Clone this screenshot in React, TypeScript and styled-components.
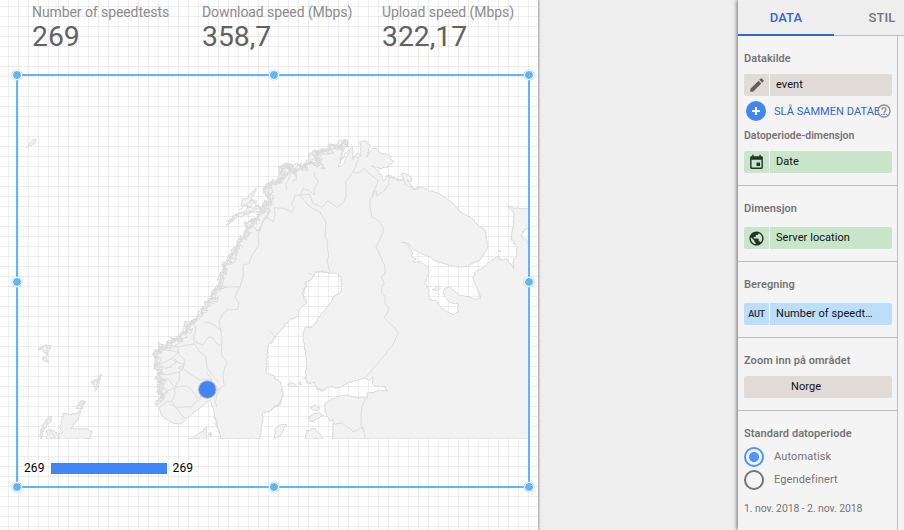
import React from 'react';
import styled, { createGlobalStyle } from 'styled-components';

const GlobalStyle = createGlobalStyle`
  *, *::before { box-sizing: border-box; }
  body { margin: 0; background: #eee; font-family: Roboto, sans-serif; overflow: hidden; }
`;

const Page = styled.div`
  display: flex;
  justify-content: space-between;
  width: 904px;
  height: 530px;
  overflow: hidden;
  background: #eee;
`;

const Report = styled.main`
  width: 538px;
  height: 530px;
  background-color: #fff;
  background-image: linear-gradient(to right, rgba(0, 0, 0, 0.062) 1px, transparent 1px),
    linear-gradient(to bottom, rgba(0, 0, 0, 0.062) 1px, transparent 1px);
  background-size: 10px 10px;
  background-position: 8px 6px;
  box-shadow: 1px 0 2px rgba(0, 0, 0, 0.35);
`;

const Scorecards = styled.div`
  display: grid;
  grid-template-columns: 170px 180px 1fr;
  height: 74px;
  padding: 4px 0 0 32px;
`;

const Score = styled.div`
  white-space: nowrap;
`;

const ScoreLabel = styled.div`
  font-size: 14px;
  line-height: 16px;
  letter-spacing: -0.08px;
  color: #8c8c8c;
`;

const ScoreValue = styled.div`
  padding-top: 1px;
  font-size: 28.300px;
  line-height: 32px;
  color: #616161;
`;

const ChartFrame = styled.section`
  position: relative;
  width: 514px;
  height: 414px;
  margin-left: 16px;
  border: 2px solid #64b5f6;
`;

const Handle = styled.i<{ $x: number; $y: number }>`
  position: absolute;
  left: ${(p) => p.$x}%;
  top: ${(p) => p.$y}%;
  width: 10px;
  height: 10px;
  margin: ${(p) => (p.$y === 0 ? -6 : -4)}px 0 0 ${(p) => (p.$x === 0 ? -6 : -4)}px;
  border: 1px solid #fff;
  border-radius: 50%;
  background: #64b5f6;
  background-clip: padding-box;
  box-shadow: 0 0 0 0.6px #b5dafa;
`;

const MapSvg = styled.svg`
  display: block;
  width: 510px;
  height: 363px;
`;

const Legend = styled.div`
  display: flex;
  align-items: center;
  height: 16px;
  margin: 21px 0 0 6px;
  gap: 6px;
  font-size: 12px;
  letter-spacing: 0.1px;
  color: #000;
`;

const LegendBar = styled.div`
  width: 116px;
  height: 11px;
  margin-top: 1px;
  background: #4285f4;
`;

const Panel = styled.aside`
  width: 166px;
  height: 530px;
  background: #f4f4f4;
  box-shadow: -1px 0 4px rgba(0, 0, 0, 0.55);
`;

const Tabs = styled.nav`
  display: flex;
  height: 36px;
  background: #eee;
  overflow: hidden;
`;

const Tab = styled.div<{ $active?: boolean }>`
  flex: 0 0 96px;
  height: 36px;
  line-height: 35px;
  text-align: center;
  font-size: 13px;
  font-weight: 500;
  letter-spacing: 0.1px;
  color: ${(p) => (p.$active ? '#3367d6' : '#757575')};
  border-bottom: ${(p) => (p.$active ? '2px solid #3367d6' : '1px solid #bdbdbd')};
`;

const PanelBody = styled.div`
  width: 160px;
  height: 494px;
  border-right: 1px solid #bdbdbd;
`;

const Section = styled.section<{ $height: number; $last?: boolean }>`
  height: ${(p) => p.$height}px;
  padding: 16px 5px 0 6px;
  border-bottom: ${(p) => (p.$last ? '0' : '1px solid #bdbdbd')};
`;

const Label = styled.h3<{ $height?: number; $small?: boolean }>`
  margin: 0;
  height: ${(p) => p.$height ?? 25}px;
  line-height: 14px;
  font-size: ${(p) => (p.$small ? 10.5 : 11)}px;
  font-weight: 600;
  letter-spacing: ${(p) => (p.$small ? 0 : 0.06)}px;
  color: #757575;
  white-space: nowrap;
`;

const Chip = styled.div<{ $color: string }>`
  display: flex;
  height: 22px;
  width: 148px;
  border-radius: 2px;
  background: ${(p) => p.$color};
  font-size: 11px;
  line-height: 21px;
  color: #111;
  overflow: hidden;
`;

const ChipIcon = styled.div`
  display: flex;
  align-items: center;
  justify-content: center;
  width: 26px;
  border-right: 1px solid #fff;
  font-size: 9px;
  font-weight: 600;
  letter-spacing: -0.3px;
  color: #333;
`;

const ChipText = styled.div<{ $indent?: number }>`
  padding-left: ${(p) => p.$indent ?? 6}px;
  letter-spacing: 0.06px;
  white-space: nowrap;
`;

const BlendRow = styled.div`
  display: flex;
  align-items: center;
  height: 30px;
  padding-left: 2px;
  margin-bottom: 3px;
  color: #3367d6;
  font-size: 11px;
`;

const PlusButton = styled.div`
  display: flex;
  flex: none;
  width: 20px;
  height: 20px;
  margin-right: 8px;
  align-items: center;
  justify-content: center;
  border-radius: 50%;
  background: #4285f4;
`;

const BlendText = styled.span`
  flex: none;
  width: 102px;
  white-space: nowrap;
  letter-spacing: 0.05px;
`;

const HelpIcon = styled.svg`
  flex: none;
  width: 16px;
  height: 16px;
`;

const RadioRow = styled.div<{ $checked?: boolean }>`
  display: flex;
  align-items: center;
  gap: 10px;
  height: 23px;
  font-size: 11px;
  letter-spacing: 0.12px;
  color: #757575;
  &::before {
    content: '';
    width: 20px;
    height: 20px;
    border-radius: 50%;
    border: 2px solid ${(p) => (p.$checked ? '#5094ff' : '#757575')};
    background: ${(p) => (p.$checked ? 'radial-gradient(circle, #5094ff 4.7px, transparent 5.3px)' : 'transparent')};
  }
`;

const DateRange = styled.div`
  margin-top: 11px;
  line-height: 14px;
  font-size: 10.5px;
  letter-spacing: -0.1px;
  color: #757575;
`;

type Point = [number, number];

// Each coast line is a flat list of x,y pairs in the map's own coordinates.
const toPoints = (s: string): Point[] =>
  s.trim().split(/\s+/).map((p) => p.split(',').map(Number) as Point);

// Subdivides a line and displaces it to give the ragged look of a fjord coast.
const ragged = (pts: Point[], amp: number, seed: number, step = 2): Point[] => {
  let s = seed;
  const rnd = () => {
    s = (s * 16807) % 2147483647;
    return s / 2147483647 - 0.5;
  };
  const out: Point[] = [];
  for (let i = 0; i < pts.length - 1; i++) {
    const [x1, y1] = pts[i];
    const [x2, y2] = pts[i + 1];
    const n = Math.max(1, Math.round(Math.hypot(x2 - x1, y2 - y1) / step));
    for (let k = 0; k < n; k++) {
      out.push([
        x1 + ((x2 - x1) * k) / n + rnd() * amp,
        y1 + ((y2 - y1) * k) / n + rnd() * amp,
      ]);
    }
  }
  out.push(pts[pts.length - 1]);
  return out;
};

const join = (pts: Point[]) => pts.map(([x, y]) => `${x.toFixed(1)},${y.toFixed(1)}`).join(' ');

const swedenWest = toPoints('221,439 218,427 215,417 214,410 212,406 209,400 207,402');
const norwaySouth = toPoints('207,402 203,405 195,412 187,418 182,423 178,424 170,422 161,415 159,408 157,403');
const norwayWest = toPoints('157,403 161,396 157,390 160,382 157,377 160,372 154,368 156,360 154,353 160,345 165,347 170,339 179,339 182,332 189,329 184,325 190,322 197,318 200,311 204,307 208,301 212,298 211,294 215,291 217,287 220,284 219,277 223,270 223,263 230,258 232,250 238,245 238,240 245,236 246,230 247,223 255,219 257,214 262,210 265,203 270,200 265,193 265,187 272,182 277,182 281,176 280,167 288,165 293,172 296,165 303,168 307,162 315,164 319,160 313,153 322,150 328,152 330,145 337,148 345,140');
const finnmark = toPoints('345,140 348,142 346,147 343,150 340,161 339,167 343,165 349,152 353,146 353,160 357,152 360,157 361,145 359,142 365,141 370,145 367,157 372,149 377,148 380,153 390,155 391,159 394,162 389,165 387,168 380,168 372,166');
const murman = toPoints('372,166 380,173 384,181 388,175 400,180 404,180 401,173 405,173 412,178 411,182 407,180 412,187 415,190 417,187 422,187 430,191 438,193 446,198 453,203 459,211 464,214 473,219 477,224 485,230 486,239 488,245 487,250 483,255 479,261 473,263 468,266 462,267 452,266 440,262 435,261 430,257 420,253 415,250 410,245 407,243 402,242');
const whiteSea = toPoints('402,242 407,244 410,248 413,254 411,256 416,259 413,262 421,262 428,267 429,273 425,282 429,290 429,299 436,301 442,308 446,311 453,315 458,312 458,303 454,304 450,302 445,297 443,292 445,288 450,287 457,293 460,296 466,296 475,299 481,298 478,290 473,278 475,272 483,268 488,263 495,258 499,257 500,260 507,259 509,262 511,264 514,269 513,261 517,255 516,249 518,247 514,244 515,241 511,240 513,227 514,213 507,205 513,208 529,209');
const eastEdge = toPoints('529,209 529,228 524,230 521,237 526,239 529,245 529,439 333,439');
const baltics = toPoints('333,439 333,419 330,421 328,417 325,412 325,403 333,399 339,396 347,395 358,398 367,398 367,393 375,392 379,390 387,391 385,387 375,386 372,383 373,377 369,381 365,378 357,380');
const finland = toPoints('357,380 347,383 340,388 330,387 322,391 317,389 314,382 308,384 305,378 306,370 307,360 305,350 303,337 305,327 313,327 317,320 325,310 331,302 333,297 341,292 341,278 336,273');
const bothnia = toPoints('336,273 330,273 322,271 315,273 311,280 307,282 303,295 304,300 307,303 301,307 297,317 290,320 283,327 280,332 275,337 268,345 267,358 266,373 273,376 280,382 283,392 282,399 280,405 274,406 271,411 262,413 263,420 261,430 260,439');

const mainland = join([
  ...ragged(swedenWest, 1.3, 11),
  ...ragged(norwaySouth, 1.2, 17),
  ...ragged(norwayWest, 4.2, 22),
  ...ragged(finnmark, 1.5, 31),
  ...ragged(murman, 0.9, 42),
  ...ragged(whiteSea, 0.8, 53),
  ...eastEdge,
  ...ragged(baltics, 0.8, 64),
  ...ragged(finland, 1.3, 75),
  ...ragged(bothnia, 1.4, 86),
]);

const fjords = [101, 257, 419].map((seed, n) =>
  join(ragged(norwayWest.map(([x, y]) => [x + 1 + n, y + n / 2]), 6.5, seed, 1.8)));
const skerries = [
  '305,378 311,384 317,388 322,391',
  '311,275 315,274 321,272 330,273',
  '307,282 303,295 306,303',
  '283,392 282,399 279,405 273,406',
  '215,417 217,426 218,429',
  '388,176 400,180 413,187 421,188',
  '343,150 340,160 345,157 350,150',
  '228,223 234,217 243,214 249,211 258,209 265,205',
  '241,209 247,204 252,200 256,205 261,210',
  '246,232 252,226 258,232 262,222 270,212 265,203',
  '266,190 271,184 273,192 267,196 270,207',
  '281,172 285,166 291,168 287,174 283,180 277,184',
  '306,164 312,162 316,167 322,164 324,170 320,160',
  '310,154 317,155 323,151 329,147',
  '155,352 165,350 175,346 182,339',
  '160,366 170,368 177,362 171,358',
  '156,378 166,380 160,388 168,392 159,398',
  '224,264 232,264 236,262',
].map((s, i) => join(ragged(toPoints(s), 4, 301 + i * 19, 1.8)));

const borders = [
  '217,407 215,402 218,390 224,385 223,378 224,370 227,362 223,358 221,353 222,342 221,330 219,322 222,315 227,310 238,309 239,303 235,297 238,290 240,287 243,277 243,265 249,264 251,257 259,245 258,235 260,229 263,220 268,218 273,222 275,214 274,208 283,208 292,212 294,208 292,205 295,196 300,195 303,189 308,190 314,195',
  '314,195 315,189 318,181 314,176 315,172',
  '300,195 309,194 313,203 322,207 328,201 337,207 344,202 346,196 346,182 353,172 358,173 365,168 368,173 374,177 378,180 377,185 373,192 372,198',
  '300,195 304,201 310,207 320,212 326,223 325,236 328,242 327,247 329,254 327,261 330,272',
  '389,176 389,184 385,190 377,196 376,190 373,195 372,198 370,199 370,208 372,217 379,221 384,230 380,239 376,247 380,255 385,267 385,274 381,276 384,283 381,289 382,293 385,296 385,303 389,308 387,314 384,317 389,323 395,328 398,333 393,345 378,363 365,378',
  '367,398 362,406 361,413 361,425 364,431 365,439',
  '333,424 342,423 347,427 350,428 353,432 363,427 364,432',
  '204,322 210,323 217,327 221,330',
  '193,323 196,329 194,335 194,341 203,345 208,337 213,338 218,345 221,345',
  '168,345 178,347 186,345 194,344 200,352 206,357 207,367 213,376 219,383',
  '178,347 179,355 185,360 183,368 191,375 200,380 210,379',
  '157,373 167,375 180,372 183,367',
  '180,372 179,380 175,387 186,386 193,391 197,398 202,397',
  '207,373 211,378 213,388 215,397',
  '220,391 214,383 209,379',
  '160,407 167,402 172,401 175,394 175,387 166,392 163,398',
  '172,401 176,407 181,407 191,407 196,402 201,399',
  '170,404 178,409 182,416 186,418',
  '166,350 178,352 173,358 165,362 156,365',
  '157,382 168,379 174,386',
  '175,361 185,365 178,368 183,370',
  '215,289 223,288 229,287 240,287',
  '270,198 272,205 262,207 270,210 267,217',
  '288,166 290,176 286,184 287,190',
  '295,169 296,179 292,182',
  '353,172 359,158 355,157',
  '270,331 275,337 271,344',
];

const islands = [
  '26,148 30,143 35,139 36,141 33,145 28,146',
  '190,439 198,434 203,431 206,428 206,439',
  '227,225 233,216 244,212 248,207 253,208 259,205 260,211 253,212 246,215 237,217 231,222',
  '242,206 242,199 248,198 253,192 256,188 255,193 251,200 257,201 250,206',
  '276,181 280,174 279,168 284,163 291,164 289,170 293,173 285,175',
  '309,155 311,152 323,149 326,151 320,157 315,160 309,160',
  '335,146 340,141 347,140 347,144 342,144 339,148',
  '275,437 275,430 279,425 286,424 284,429 281,435 276,438',
  '306,439 306,432 313,428 317,431 320,434 322,439',
  '309,417 315,413 320,413 323,416 318,418 314,422 309,421',
  '311,408 315,405 320,408 316,411 312,410',
  '59,439 59,434 62,432 60,427 62,418 64,413 70,415 81,411 80,416 74,425 71,429 85,429 92,431 90,439',
  '41,439 40,431 48,417 52,416 51,421 43,430 42,438',
  '47,439 47,431 52,430 56,433 58,439',
  '39,349 45,345 51,345 49,351 47,355 43,350',
  '43,358 46,358 48,363 45,361',
  '92,382 95,380 98,379 101,374 99,380 98,386 96,391 94,386',
  '77,408 80,401 86,401 83,405 82,410',
  '209,434 211,433 211,436',
  '289,385 291,382 294,384 296,386 292,387',
  '299,384 301,382 301,385',
  '433,289 438,286 440,289 436,290',
  '499,251 500,250 501,252',
].map((s, i) => {
  const p = toPoints(s);
  return join(ragged([...p, p[0]], i === 0 ? 0.6 : 1.8, 501 + i * 13, 2));
});

const islandDetail = [
  '39,349 44,347 49,346 47,351 46,356',
  '93,383 97,381 99,377 96,387',
  '78,407 81,403 85,402 81,409',
  '41,436 42,429 47,421 51,418',
  '48,436 52,432 56,438 50,437',
].map((s, i) => join(ragged(toPoints(s), 3, 911 + i * 17, 1.6)));

const ScandinaviaMap = () => (
  <MapSvg viewBox="18 76 510 363">
    <g fill="#f2f2f2" stroke="#d9d9d9" strokeWidth="1" strokeLinejoin="round">
      <polygon points={mainland} />
      {islands.map((d, i) => <polygon key={i} points={d} />)}
    </g>
    <g fill="none" stroke="#dcdcdc" strokeWidth="1" strokeLinejoin="round">
      {fjords.map((d, i) => <polyline key={i} points={d} />)}
      {skerries.map((d, i) => <polyline key={i} points={d} />)}
      {islandDetail.map((d, i) => <polyline key={i} points={d} />)}
      {borders.map((d, i) => <polyline key={i} points={join(ragged(toPoints(d), 0.6, 701 + i * 7, 3))} />)}
    </g>
    <circle cx="207.3" cy="389.5" r="8.8" fill="#4285f4" stroke="#b9b9b9" strokeWidth="1" />
  </MapSvg>
);

const PencilIcon = () => (
  <svg width="18" height="18" viewBox="0 0 24 24" fill="#616161">
    <path d="M3 17.25V21h3.75L17.81 9.94l-3.75-3.75L3 17.25zM20.71 7.04a1 1 0 0 0 0-1.41l-2.34-2.34a1 1 0 0 0-1.41 0l-1.83 1.83 3.75 3.75 1.83-1.83z" />
  </svg>
);

const CalendarIcon = () => (
  <svg width="17" height="17" viewBox="0 0 24 24" fill="#263229">
    <path d="M17 12h-5v5h5v-5zM16 1v2H8V1H6v2H5a2 2 0 0 0-2 2v14a2 2 0 0 0 2 2h14a2 2 0 0 0 2-2V5a2 2 0 0 0-2-2h-1V1h-2zm3 18H5V8h14v11z" />
  </svg>
);

const GlobeIcon = () => (
  <svg width="17" height="17" viewBox="0 0 24 24" fill="#263229">
    <path d="M12 2C6.48 2 2 6.48 2 12s4.48 10 10 10 10-4.480 10-10S17.520 2 12 2zm-1 17.930c-3.950-.49-7-3.850-7-7.930 0-.62.08-1.210.21-1.790L9 15v1c0 1.100.9 2 2 2v1.930zm6.900-2.540c-.26-.81-1-1.390-1.900-1.390h-1v-3c0-.55-.45-1-1-1H8v-2h2c.55 0 1-.45 1-1V7h2c1.100 0 2-.9 2-2v-.41c2.930 1.190 5 4.060 5 7.410 0 2.080-.8 3.970-2.100 5.390z" />
  </svg>
);

const scores = [
  ['Number of speedtests', '269'],
  ['Download speed (Mbps)', '358,7'],
  ['Upload speed (Mbps)', '322,17'],
];

const handles: Point[] = [[0, 0], [50, 0], [100, 0], [0, 50], [100, 50], [0, 100], [50, 100], [100, 100]];

export default function App() {
  return (
    <>
      <GlobalStyle />
      <Page>
        <Report>
          <Scorecards>
            {scores.map(([label, value]) => (
              <Score key={label}>
                <ScoreLabel>{label}</ScoreLabel>
                <ScoreValue>{value}</ScoreValue>
              </Score>
            ))}
          </Scorecards>
          <ChartFrame>
            <ScandinaviaMap />
            <Legend>
              <span>269</span>
              <LegendBar />
              <span>269</span>
            </Legend>
            {handles.map(([x, y]) => <Handle key={`${x}-${y}`} $x={x} $y={y} />)}
          </ChartFrame>
        </Report>
        <Panel>
          <Tabs>
            <Tab $active>DATA</Tab>
            <Tab>STIL</Tab>
          </Tabs>
          <PanelBody>
            <Section $height={150}>
              <Label $height={22}>Datakilde</Label>
              <Chip $color="#e0dbd7">
                <ChipIcon><PencilIcon /></ChipIcon>
                <ChipText>event</ChipText>
              </Chip>
              <BlendRow>
                <PlusButton>
                  <svg width="10" height="10" viewBox="0 0 10 10" stroke="#fff" strokeWidth="2">
                    <path d="M5 1v8M1 5h8" />
                  </svg>
                </PlusButton>
                <BlendText>SLÅ SAMMEN DATAE…</BlendText>
                <HelpIcon viewBox="0 0 24 24" fill="#8a8a8a">
                  <path d="M11 18h2v-2h-2v2zm1-16C6.480 2 2 6.480 2 12s4.480 10 10 10 10-4.480 10-10S17.520 2 12 2zm0 18c-4.410 0-8-3.590-8-8s3.590-8 8-8 8 3.590 8 8-3.590 8-8 8zm0-14c-2.210 0-4 1.790-4 4h2c0-1.100.9-2 2-2s2 .9 2 2c0 2-3 1.750-3 5h2c0-2.250 3-2.500 3-5 0-2.210-1.790-4-4-4z" />
                </HelpIcon>
              </BlendRow>
              <Label $height={22} $small>Datoperiode-dimensjon</Label>
              <Chip $color="#c8e6c9">
                <ChipIcon><CalendarIcon /></ChipIcon>
                <ChipText>Date</ChipText>
              </Chip>
            </Section>
            <Section $height={76}>
              <Label>Dimensjon</Label>
              <Chip $color="#c8e6c9">
                <ChipIcon><GlobeIcon /></ChipIcon>
                <ChipText>Server location</ChipText>
              </Chip>
            </Section>
            <Section $height={76}>
              <Label>Beregning</Label>
              <Chip $color="#bbdefb">
                <ChipIcon>AUT</ChipIcon>
                <ChipText>Number of speedt…</ChipText>
              </Chip>
            </Section>
            <Section $height={73}>
              <Label $height={22}>Zoom inn på området</Label>
              <Chip $color="#e0dbd7">
                <ChipText $indent={47}>Norge</ChipText>
              </Chip>
            </Section>
            <Section $height={119} $last>
              <Label $height={18}>Standard datoperiode</Label>
              <RadioRow $checked>Automatisk</RadioRow>
              <RadioRow>Egendefinert</RadioRow>
              <DateRange>1. nov. 2018 - 2. nov. 2018</DateRange>
            </Section>
          </PanelBody>
        </Panel>
      </Page>
    </>
  );
}
